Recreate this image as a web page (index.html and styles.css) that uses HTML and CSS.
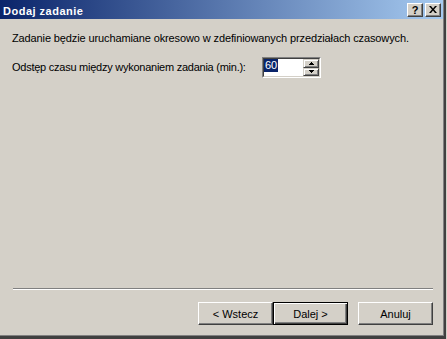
FILE: index.html
```html
<!DOCTYPE html>
<html lang="pl">
<head>
<meta charset="utf-8">
<title>Dodaj zadanie</title>
<link rel="stylesheet" href="styles.css">
</head>
<body>
<div class="window">
  <div class="frame">
    <div class="titlebar">
      <span class="title">Dodaj zadanie</span>
      <div class="caption-buttons">
        <span class="cap-btn help">?</span>
        <span class="cap-btn close">
          <svg width="8" height="7" viewBox="0 0 8 7"><path d="M0 0h2l2 2.4L6 0h2L5 3.5 8 7H6L4 4.6 2 7H0l3-3.5z" fill="#000"/></svg>
        </span>
      </div>
    </div>
    <div class="content">
      <p class="intro">Zadanie będzie uruchamiane okresowo w zdefiniowanych przedziałach czasowych.</p>
      <div class="field-row">
        <label class="field-label">Odstęp czasu między wykonaniem zadania (min.):</label>
        <div class="spin">
          <div class="spin-inner">
            <div class="spin-input"><span class="sel">60</span></div>
            <div class="spin-buttons">
              <span class="spin-btn">
                <svg width="5" height="3" viewBox="0 0 5 3"><rect x="2" y="0" width="1" height="1"/><rect x="1" y="1" width="3" height="1"/><rect x="0" y="2" width="5" height="1"/></svg>
              </span>
              <span class="spin-btn">
                <svg width="5" height="3" viewBox="0 0 5 3"><rect x="0" y="0" width="5" height="1"/><rect x="1" y="1" width="3" height="1"/><rect x="2" y="2" width="1" height="1"/></svg>
              </span>
            </div>
          </div>
        </div>
      </div>
      <div class="separator"></div>
      <div class="button-row">
        <button class="btn">&lt; Wstecz</button>
        <button class="btn default">Dalej &gt;</button>
        <button class="btn cancel">Anuluj</button>
      </div>
    </div>
  </div>
</div>
</body>
</html>
```
FILE: styles.css
```css
html, body {
  margin: 0;
  padding: 0;
}

body {
  background: #d4d0c8;
  font-family: "Liberation Sans", Arial, sans-serif;
  font-size: 11px;
  color: #000;
}

.window {
  width: 444px;
  height: 336px;
  border-right: 2px solid #404040;
  border-bottom: 3px solid #404040;
}

.frame {
  width: 443px;
  height: 335px;
  border-right: 1px solid #808080;
  border-bottom: 1px solid #808080;
  display: flex;
  flex-direction: column;
  background: #d4d0c8;
}

.titlebar {
  height: 19px;
  box-sizing: border-box;
  padding: 3px 2px 2px 3px;
  display: flex;
  justify-content: space-between;
  align-items: flex-start;
  background: linear-gradient(to right, #0a246a, #a6caf0);
}

.title {
  color: #fff;
  font-weight: bold;
  font-size: 11px;
  letter-spacing: 0.5px;
  line-height: 14px;
  padding-top: 1px;
}

.caption-buttons {
  display: flex;
  gap: 2px;
}

.cap-btn {
  width: 16px;
  height: 14px;
  box-sizing: border-box;
  background: #d4d0c8;
  border: 1px solid;
  border-color: #fff #404040 #404040 #fff;
  box-shadow: inset -1px -1px #808080;
  display: flex;
  align-items: center;
  justify-content: center;
  font-weight: bold;
  font-size: 11px;
  line-height: 12px;
}

.cap-btn.close svg {
  display: block;
  margin-top: -1px;
}

.content {
  flex: 1;
  display: flex;
  flex-direction: column;
  padding: 13px 10px 10px 12px;
}

.intro {
  margin: 0;
  line-height: 13px;
  letter-spacing: -0.12px;
}

.field-row {
  display: flex;
  align-items: center;
  margin-top: 12px;
}

.field-label {
  width: 250px;
  line-height: 13px;
  letter-spacing: -0.25px;
}

.spin {
  width: 59px;
  height: 21px;
  box-sizing: border-box;
  border: 1px solid;
  border-color: #808080 #fff #fff #808080;
}

.spin-inner {
  height: 100%;
  box-sizing: border-box;
  border: 1px solid;
  border-color: #404040 #d4d0c8 #d4d0c8 #404040;
  background: #fff;
  display: flex;
}

.spin-input {
  flex: 1;
}

.sel {
  display: inline-block;
  background: #0a246a;
  color: #fff;
  line-height: 13px;
  padding: 0 1px;
}

.spin-buttons {
  width: 16px;
  display: flex;
  flex-direction: column;
}

.spin-btn {
  flex: 1;
  box-sizing: border-box;
  background: #d4d0c8;
  border: 1px solid;
  border-color: #d4d0c8 #404040 #404040 #d4d0c8;
  box-shadow: inset 1px 1px #fff, inset -1px -1px #808080;
  display: flex;
  align-items: center;
  justify-content: center;
}

.spin-btn svg {
  display: block;
  fill: #000;
}

.separator {
  margin-top: auto;
  margin-left: 1px;
  border-top: 1px solid #808080;
  border-bottom: 1px solid #fff;
}

.button-row {
  display: flex;
  justify-content: flex-end;
  margin-top: 12px;
}

.btn {
  width: 75px;
  height: 23px;
  box-sizing: border-box;
  margin: 0;
  padding: 0;
  font-family: inherit;
  font-size: 11px;
  color: #000;
  background: #d4d0c8;
  border: 1px solid;
  border-color: #fff #404040 #404040 #fff;
  box-shadow: inset -1px -1px #808080;
}

.btn.default {
  border-color: #000;
  box-shadow: inset 1px 1px #fff, inset -1px -1px #404040, inset -2px -2px #808080;
}

.btn.cancel {
  margin-left: 10px;
}
```
